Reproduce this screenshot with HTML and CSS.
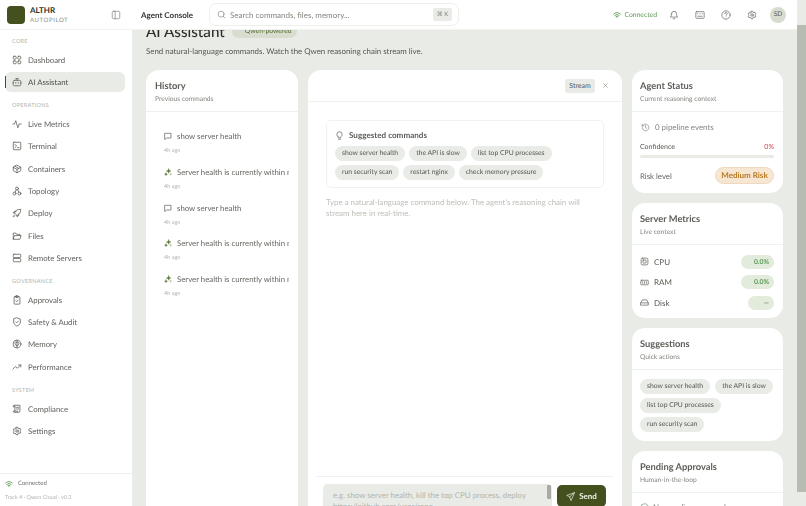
FILE: index.html
```html
<!DOCTYPE html>
<html lang="en">
<head>
<meta charset="utf-8">
<title>AI Assistant</title>
<link rel="stylesheet" href="styles.css">
</head>
<body>
<svg class="defs" width="0" height="0" aria-hidden="true">
  <symbol id="i-wifi" viewBox="0 0 24 24"><path d="M2 9a15 15 0 0 1 20 0M5.500 13a10 10 0 0 1 13 0M9 16.500a5 5 0 0 1 6 0M12 20h.01"/></symbol>
  <symbol id="i-gear" viewBox="0 0 24 24"><path d="M10 3h4l.6 2.600 2.200 1 2.400-1.200 2 3.400-2 1.700v2.200l2 1.700-2 3.400-2.400-1.200-2.200 1L14 21h-4l-.6-2.600-2.200-1-2.400 1.200-2-3.400 2-1.700v-2.200l-2-1.700 2-3.400 2.400 1.200 2.200-1z"/><circle cx="12" cy="12" r="3"/></symbol>
  <symbol id="i-msg" viewBox="0 0 24 24"><path d="M3 4h18v14H8l-5 4z"/></symbol>
  <symbol id="i-spark" viewBox="0 0 24 24"><path d="M14 2l2 5 5 2-5 2-2 5-2-5-5-2 5-2zM6 14l1.500 3 3 1.500-3 1.500L6 23l-1.500-3-3-1.500 3-1.500z"/><path d="M20 16v5M17.500 18.500h5"/></symbol>
</svg>
<div class="app">
  <div class="main">
    <div class="shell">
      <aside class="sidebar">
        <div class="brand">
          <div class="logo"></div>
          <div class="brand-text"><div class="brand-name">ALTHR</div><div class="brand-sub">AUTOPILOT</div></div>
          <svg class="ic collapse" viewBox="0 0 24 24"><rect x="3" y="3" width="18" height="18" rx="3"/><path d="M10 3v18"/></svg>
        </div>
        <nav class="nav">
          <div class="nav-label first">CORE</div>
          <a class="nav-item"><svg class="ic" viewBox="0 0 24 24"><rect x="3" y="3" width="7" height="7" rx="2"/><rect x="14" y="3" width="7" height="7" rx="2"/><rect x="3" y="14" width="7" height="7" rx="2"/><rect x="14" y="14" width="7" height="7" rx="2"/></svg>Dashboard</a>
          <a class="nav-item active"><svg class="ic" viewBox="0 0 24 24"><rect x="3" y="8" width="18" height="13" rx="3"/><path d="M12 8V4M9 4h6M2 14h1M21 14h1"/><path d="M9 13v2M15 13v2"/></svg>AI Assistant</a>
          <div class="nav-label">OPERATIONS</div>
          <a class="nav-item"><svg class="ic" viewBox="0 0 24 24"><path d="M2 12h4l3-8 5 17 3-9h5"/></svg>Live Metrics</a>
          <a class="nav-item"><svg class="ic" viewBox="0 0 24 24"><rect x="3" y="3" width="18" height="18" rx="2"/><path d="M7 8l4 4-4 4M13 16h4"/></svg>Terminal</a>
          <a class="nav-item"><svg class="ic" viewBox="0 0 24 24"><path d="M12 3l9 5v8l-9 5-9-5V8zM3 8l9 5 9-5M7 5.500l9 5M12 13v8"/></svg>Containers</a>
          <a class="nav-item"><svg class="ic" viewBox="0 0 24 24"><circle cx="12" cy="6" r="3.500"/><circle cx="6" cy="18" r="3.500"/><circle cx="18" cy="18" r="3.500"/><path d="M10 9l-2.500 6M14 9l2.500 6"/></svg>Topology</a>
          <a class="nav-item"><svg class="ic" viewBox="0 0 24 24"><path d="M9 15l-3-3c1-5 6-9 15-9 0 9-4 14-9 15zM6 12H3l3-4h4M12 18v3l4-3v-4M5 17c-1.500 1-2 3-2 4 1 0 3-.5 4-2"/></svg>Deploy</a>
          <a class="nav-item"><svg class="ic" viewBox="0 0 24 24"><path d="M3 19V5h6l2 3h8v3M3 19l3-8h16l-3 8z"/></svg>Files</a>
          <a class="nav-item"><svg class="ic" viewBox="0 0 24 24"><rect x="3" y="3" width="18" height="8" rx="2"/><rect x="3" y="13" width="18" height="8" rx="2"/></svg>Remote Servers</a>
          <div class="nav-label">GOVERNANCE</div>
          <a class="nav-item"><svg class="ic" viewBox="0 0 24 24"><rect x="5" y="4" width="14" height="18" rx="2"/><rect x="9" y="2" width="6" height="4" rx="1"/><path d="M9 14l2 2 4-4"/></svg>Approvals</a>
          <a class="nav-item"><svg class="ic" viewBox="0 0 24 24"><path d="M12 2l8 3v7c0 5-4 8-8 10-4-2-8-5-8-10V5z"/><path d="M9 12l2 2 4-4"/></svg>Safety &amp; Audit</a>
          <a class="nav-item"><svg class="ic" viewBox="0 0 24 24"><circle cx="12" cy="12" r="9.500"/><path d="M12 3v18M12 8c-3-2-5 0-5 2s2 2 2 4 2 3 3 2M12 8c3-2 5 0 5 2s-2 2-2 4-2 3-3 2"/></svg>Memory</a>
          <a class="nav-item"><svg class="ic" viewBox="0 0 24 24"><path d="M2 17l6-6 5 4 8-8M16 7h5v5"/></svg>Performance</a>
          <div class="nav-label">SYSTEM</div>
          <a class="nav-item"><svg class="ic" viewBox="0 0 24 24"><path d="M7 3h12v14a3 3 0 0 1-3 3H5a3 3 0 0 1-2-3h10v2M7 17V5a2 2 0 0 0-4 0v2h4M11 8h5M11 12h5"/></svg>Compliance</a>
          <a class="nav-item"><svg class="ic"><use href="#i-gear"/></svg>Settings</a>
        </nav>
        <div class="side-foot">
          <div class="conn"><svg class="ic wifi"><use href="#i-wifi"/></svg>Connected</div>
          <div class="track">Track 4 · Qwen Cloud · v0.3</div>
        </div>
      </aside>

      <div class="work">
        <header class="topbar">
          <div class="top-title">Agent Console</div>
          <div class="search">
            <svg class="ic search-ic" viewBox="0 0 24 24"><circle cx="11" cy="11" r="8"/><path d="M21 21l-4.500-4.500"/></svg>
            <span class="search-text">Search commands, files, memory...</span>
            <span class="kbd">⌘ K</span>
          </div>
          <div class="top-right">
            <span class="top-conn"><svg class="ic wifi"><use href="#i-wifi"/></svg>Connected</span>
            <svg class="ic top-ic" viewBox="0 0 24 24"><path d="M6 9a6 6 0 0 1 12 0c0 6 3 8 3 8H3s3-2 3-8M10 21h4"/></svg>
            <svg class="ic top-ic" viewBox="0 0 24 24"><rect x="2" y="4" width="20" height="16" rx="2"/><path d="M6 9h.01M10 9h.01M14 9h.01M18 9h.01M7 15h10"/></svg>
            <svg class="ic top-ic" viewBox="0 0 24 24"><circle cx="12" cy="12" r="10"/><path d="M9 9a3 3 0 0 1 6 0c0 2-3 2.500-3 4M12 17h.01"/></svg>
            <svg class="ic top-ic"><use href="#i-gear"/></svg>
            <span class="avatar">SD</span>
          </div>
        </header>

        <main class="content">
          <div class="page-head">
            <h1>AI Assistant</h1>
            <span class="page-badge">Qwen-powered</span>
          </div>
          <p class="page-sub">Send natural-language commands. Watch the Qwen reasoning chain stream live.</p>

          <div class="columns">
            <section class="card history">
              <div class="card-head"><div class="card-title">History</div><div class="card-sub">Previous commands</div></div>
              <div class="hist-list">
                <div class="hist"><div class="hist-row"><svg class="ic hist-ic"><use href="#i-msg"/></svg><span class="hist-text">show server health</span></div><div class="hist-time">4h ago</div></div>
                <div class="hist"><div class="hist-row"><svg class="ic hist-ic spark"><use href="#i-spark"/></svg><span class="hist-text">Server health is currently within normal limits</span></div><div class="hist-time">4h ago</div></div>
                <div class="hist"><div class="hist-row"><svg class="ic hist-ic"><use href="#i-msg"/></svg><span class="hist-text">show server health</span></div><div class="hist-time">4h ago</div></div>
                <div class="hist"><div class="hist-row"><svg class="ic hist-ic spark"><use href="#i-spark"/></svg><span class="hist-text">Server health is currently within normal limits</span></div><div class="hist-time">4h ago</div></div>
                <div class="hist"><div class="hist-row"><svg class="ic hist-ic spark"><use href="#i-spark"/></svg><span class="hist-text">Server health is currently within normal limits</span></div><div class="hist-time">4h ago</div></div>
              </div>
            </section>

            <section class="card chat">
              <div class="chat-head">
                <span class="stream">Stream</span>
                <svg class="ic close" viewBox="0 0 24 24"><path d="M6 6l12 12M18 6L6 18"/></svg>
              </div>
              <div class="chat-body">
                <div class="suggest">
                  <div class="suggest-title"><svg class="ic bulb" viewBox="0 0 24 24"><path d="M8 15c-2-1.500-3-3.500-3-6a7 7 0 0 1 14 0c0 2.500-1 4.500-3 6-.7.600-1 1.500-1 3H9c0-1.500-.3-2.400-1-3zM9 22h6"/></svg>Suggested commands</div>
                  <div class="chips">
                    <span class="chip">show server health</span>
                    <span class="chip">the API is slow</span>
                    <span class="chip">list top CPU processes</span>
                    <span class="chip">run security scan</span>
                    <span class="chip">restart nginx</span>
                    <span class="chip">check memory pressure</span>
                  </div>
                </div>
                <p class="hint">Type a natural-language command below. The agent's reasoning chain will stream here in real-time.</p>
              </div>
              <div class="composer">
                <div class="input-box">
                  <div class="input-text">e.g. show server health, kill the top CPU process, deploy https://github.com/user/repo</div>
                  <span class="input-thumb"></span>
                </div>
                <button class="send"><svg class="ic send-ic" viewBox="0 0 24 24"><path d="M22 2L2 9l8 4 3 9zM10 13L22 2"/></svg>Send</button>
              </div>
            </section>

            <div class="rail">
              <section class="card">
                <div class="card-head"><div class="card-title">Agent Status</div><div class="card-sub">Current reasoning context</div></div>
                <div class="card-body status-body">
                  <div class="events"><svg class="ic" viewBox="0 0 24 24"><path d="M3 12a9 9 0 1 0 3-6.700L3 8M3 3v5h5M12 7v5l3 2"/></svg>0 pipeline events</div>
                  <div class="conf-row"><span>Confidence</span><span class="conf-val">0%</span></div>
                  <div class="bar"></div>
                  <div class="risk-row"><span>Risk level</span><span class="risk">Medium Risk</span></div>
                </div>
              </section>
              <section class="card">
                <div class="card-head"><div class="card-title">Server Metrics</div><div class="card-sub">Live context</div></div>
                <div class="card-body metrics">
                  <div class="metric"><svg class="ic" viewBox="0 0 24 24"><rect x="3" y="3" width="18" height="18" rx="4"/><rect x="8" y="8" width="8" height="8" rx="1"/></svg><span class="metric-name">CPU</span><span class="metric-val">0.0%</span></div>
                  <div class="metric"><svg class="ic" viewBox="0 0 24 24"><rect x="2" y="6" width="20" height="12" rx="2"/><path d="M7 10v4M12 10v4M17 10v4"/></svg><span class="metric-name">RAM</span><span class="metric-val">0.0%</span></div>
                  <div class="metric"><svg class="ic" viewBox="0 0 24 24"><path d="M2 13l4-8h12l4 8v6H2zM2 13h20"/></svg><span class="metric-name">Disk</span><span class="metric-val short">—</span></div>
                </div>
              </section>
              <section class="card">
                <div class="card-head"><div class="card-title">Suggestions</div><div class="card-sub">Quick actions</div></div>
                <div class="card-body chips side-chips">
                  <span class="chip">show server health</span>
                  <span class="chip">the API is slow</span>
                  <span class="chip">list top CPU processes</span>
                  <span class="chip">run security scan</span>
                </div>
              </section>
              <section class="card">
                <div class="card-head"><div class="card-title">Pending Approvals</div><div class="card-sub">Human-in-the-loop</div></div>
                <div class="card-body"><div class="approval"><svg class="ic check" viewBox="0 0 24 24"><circle cx="12" cy="12" r="10"/><path d="M8 12l3 3 5-5"/></svg>No pending approvals</div></div>
              </section>
            </div>
          </div>
        </main>
      </div>
    </div>
  </div>
  <div class="scrollbar"><span class="thumb"></span></div>
</div>
</body>
</html>
```
FILE: styles.css
```css
* { box-sizing: border-box; }
html, body { margin: 0; height: 100%; overflow: hidden; }
body { font-family: Lato, "Noto Sans", "Liberation Sans", sans-serif; color: #3d3f3a; background: #e8ebe6; text-rendering: geometricPrecision; }
.defs { position: absolute; }
.ic { width: 12px; height: 12px; flex: none; fill: none; stroke: #55584f; stroke-width: 1.800; stroke-linecap: round; stroke-linejoin: round; }
.app { display: flex; height: 506px; overflow: hidden; filter: blur(.35px); will-change: filter; }
.main { flex: 1; min-width: 0; }
.shell { display: flex; height: 506px; }

.sidebar { width: 132px; flex: none; background: #fff; display: flex; flex-direction: column; height: 506px; }
.brand { height: 29px; flex: none; display: flex; align-items: center; padding-left: 7px; padding-right: 11px; gap: 5px; box-shadow: 0 1px 0 #f2f3f0; }
.logo { width: 18px; height: 18px; border-radius: 4px; background: #44511f; }
.brand-text { flex: 1; }
.brand-name { font-size: 8px; font-weight: 700; line-height: 11px; color: #2f312c; }
.brand-sub { font-size: 6px; letter-spacing: .6px; line-height: 8px; color: #8b8d86; margin-top: 1px; }
.collapse { width: 10px; height: 10px; stroke: #777a72; stroke-width: 1.600; }

.nav { flex: 1; padding: 9px 7px 0 5px; display: flex; flex-direction: column; }
.nav-label { font-size: 5.500px; line-height: 8px; letter-spacing: .3px; color: #b3b5ae; padding-left: 7px; margin-top: 8.700px; margin-bottom: 3px; }
.nav-label.first { margin-top: 0; margin-bottom: 3px; }
.nav-item { height: 22.300px; flex: none; display: flex; align-items: center; gap: 6px; padding-left: 7px; font-size: 7.800px; color: #5c5e58; border-radius: 6px; position: relative; }
.nav-item .ic { width: 10px; height: 10px; }
.nav-item.active { height: 20px; margin: 1px 0; background: #e9ebe6; color: #4a4c46; }
.nav-item.active::before { content: ""; position: absolute; left: 0; top: 4px; bottom: 4px; width: 1px; background: #44511f; }

.side-foot { border-top: 1px solid #eef0ec; height: 33px; flex: none; padding: 5px 5px 0; }
.conn { display: flex; align-items: center; gap: 5px; font-size: 6px; line-height: 10px; color: #6f716b; }
.wifi { width: 8px; height: 8px; stroke: #5d9a55; stroke-width: 2.600; }
.track { font-size: 5.500px; line-height: 7px; color: #b3b5ae; margin-top: 6px; white-space: nowrap; }

.work { flex: 1; min-width: 0; display: flex; flex-direction: column; height: 506px; }
.topbar { height: 29px; flex: none; background: #fff; display: flex; align-items: center; padding: 0 11px 0 9px; box-shadow: 0 1px 0 #f2f3f0; position: relative; z-index: 2; }
.top-title { font-size: 8px; font-weight: 700; color: #33352f; width: 68px; flex: none; white-space: nowrap; }
.search { width: 250px; height: 23px; border: 1px solid #eef0ec; border-radius: 7px; display: flex; align-items: center; padding: 0 6px 0 7px; gap: 4px; flex: none; }
.search-ic { width: 9px; height: 9px; stroke: #777a72; stroke-width: 1.600; }
.search-text { flex: 1; font-size: 8px; color: #85877f; white-space: nowrap; }
.kbd { width: 19px; height: 13px; text-align: center; font-size: 6px; color: #85877f; background: #e8ebe6; border-radius: 2px; line-height: 13px; }
.top-right { flex: 1; display: flex; align-items: center; justify-content: flex-end; }
.top-conn { display: flex; align-items: center; gap: 3px; font-size: 6.800px; color: #5d9a55; margin-right: 12px; white-space: nowrap; }
.top-ic { width: 10px; height: 10px; margin-right: 16px; stroke-width: 1.600; stroke: #5c5e58; }
.avatar { width: 16px; height: 16px; border-radius: 50%; background: #d7dccf; font-size: 6.500px; text-align: center; line-height: 16px; color: #55584f; margin-left: -3px; }

.content { flex: 1; min-height: 0; overflow: hidden; padding: 0 14px 0 14px; }
.page-head { display: flex; align-items: flex-start; gap: 7px; height: 14px; }
h1 { margin: -7px 0 0; font-size: 15.200px; line-height: 21px; font-weight: 500; color: #2c2e29; white-space: nowrap; }
.page-badge { font-size: 6.800px; line-height: 13px; height: 13px; margin-top: -4px; padding: 0 5px 0 13px; background: #d8ddcf; border-radius: 7px; color: #4f6b2b; white-space: nowrap; }
.page-sub { margin: 1px 0 0; font-size: 7.900px; line-height: 14px; color: #55584f; white-space: nowrap; }

.columns { display: grid; grid-template-columns: 152px 314px 151px; gap: 10px; margin-top: 12px; align-items: start; }
.card { background: #fff; border-radius: 13px; overflow: hidden; }
.card-head { height: 42px; padding: 9px 9px 0; border-bottom: 1px solid #eff1ed; }
.rail .card-head { padding-left: 8px; }
.card-title { font-size: 9.300px; line-height: 13px; font-weight: 700; color: #5c5e58; }
.card-sub { font-size: 6.700px; line-height: 10px; color: #85877f; margin-top: 2px; }

.history { height: 460px; }
.hist-list { padding: 17px 9px 0 18px; }
.hist { height: 35.800px; }
.hist-row { display: flex; align-items: center; gap: 5px; height: 14px; }
.hist-ic { width: 8px; height: 8px; stroke-width: 2; flex: none; }
.spark { stroke: #5f7a3c; fill: #5f7a3c; stroke-width: 1; }
.hist-text { font-size: 7.800px; color: #64665f; white-space: nowrap; overflow: hidden; width: 112px; }
.hist-time { font-size: 5.500px; line-height: 8px; color: #b3b5ae; margin-top: 4px; }

.chat { height: 460px; display: flex; flex-direction: column; }
.chat-head { height: 32px; flex: none; border-bottom: 1px solid #eff1ed; display: flex; align-items: center; justify-content: flex-end; padding-right: 13px; gap: 7px; }
.stream { font-size: 7px; line-height: 14px; width: 30px; text-align: center; background: #e8ebe6; border-radius: 3px; color: #55584f; }
.close { width: 7px; height: 7px; stroke: #777a72; stroke-width: 2; }
.chat-body { height: 374px; flex: none; padding: 18px 18px 0; }
.suggest { height: 68px; border: 1px solid #f0f2ee; border-radius: 5px; padding: 8px; }
.suggest-title { display: flex; align-items: center; gap: 5px; font-size: 8.100px; line-height: 12px; font-weight: 700; color: #5c5e58; margin-bottom: 5px; }
.bulb { width: 9px; height: 9px; }
.chips { display: flex; flex-wrap: wrap; gap: 4px; }
.chip { font-size: 6.800px; line-height: 15px; background: #e8ebe6; border-radius: 8px; padding: 0 7px; color: #55584f; white-space: nowrap; }
.hint { margin: 9px 0 0; font-size: 7.900px; line-height: 11px; color: #bdbfb8; width: 265px; }
.composer { height: 54px; margin: 0 9px; flex: none; border-top: 1px solid #eff1ed; display: flex; padding-top: 7px; gap: 5px; }
.input-box { width: 229px; height: 40px; background: #e8ebe6; border-radius: 5px; padding: 6px 10px; position: relative; flex: none; margin-left: 6px; }
.input-text { font-size: 7.900px; line-height: 11px; color: #b3b5ae; width: 205px; }
.input-thumb { position: absolute; right: 1px; top: 1px; width: 4px; height: 14px; background: #a8aaa3; border-radius: 1px; }
.send { width: 49px; height: 22px; border: 0; border-radius: 5px; background: #44511f; color: #f1f3ec; font: 700 8px Lato, sans-serif; display: flex; align-items: center; justify-content: center; gap: 4px; padding: 0; margin-top: 1px; }
.send-ic { width: 9px; height: 9px; stroke: #f1f3ec; }

.rail { display: flex; flex-direction: column; gap: 10px; }
.card-body { padding: 9px 9px 9px 8px; }
.status-body { padding-top: 9px; padding-bottom: 9px; font-size: 7.800px; color: #64665f; }
.events { display: flex; align-items: center; gap: 5px; font-size: 7.900px; line-height: 13px; color: #85877f; padding-left: 1px; }
.events .ic { width: 9px; height: 9px; stroke: #85877f; }
.conf-row { display: flex; justify-content: space-between; font-size: 7px; line-height: 10px; margin-top: 8px; color: #55584f; }
.conf-val { color: #d0475a; }
.bar { height: 3px; background: #e8ebe6; border-radius: 2px; margin-top: 3px; }
.risk-row { display: flex; justify-content: space-between; align-items: center; margin-top: 9px; }
.risk { font-size: 8px; font-weight: 700; line-height: 15px; width: 59px; text-align: center; border-radius: 9px; background: #f7e6d2; border: 1px solid #edd9bf; color: #b97a24; white-space: nowrap; }
.metrics { display: flex; flex-direction: column; gap: 5.500px; padding-top: 9px; padding-bottom: 8px; }
.metric { display: flex; align-items: center; height: 15px; gap: 5px; font-size: 8px; color: #55584f; }
.metric .ic { width: 9px; height: 9px; }
.metric-name { flex: 1; }
.metric-val { width: 33px; height: 14px; border-radius: 7px; background: #e3ebdc; color: #5d9a55; font-size: 6.800px; font-weight: 700; line-height: 14px; text-align: right; padding-right: 5px; }
.metric-val.short { width: 26px; padding-right: 5px; color: #6b8c5c; }
.side-chips { padding: 9px 4px 9px 8px; column-gap: 5px; }
.approval { display: flex; align-items: center; gap: 4px; font-size: 8px; color: #85877f; }
.check { width: 9px; height: 9px; stroke: #5d9a55; }

.scrollbar { width: 9px; flex: none; background: #e8ebe6; height: 506px; padding-top: 25px; }
.thumb { display: block; height: 467px; background: #b7bcb1; }
```
